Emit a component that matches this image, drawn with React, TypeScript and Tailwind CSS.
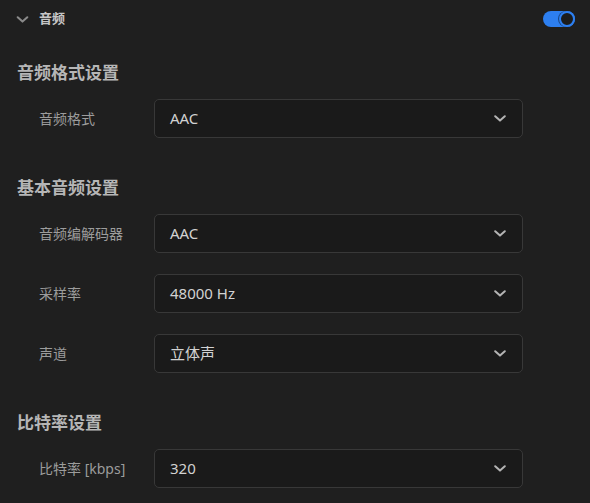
import { type FC } from 'react';

type Row = { label: string; value: string };
type Section = { title: string; rows: Row[] };

const sections: Section[] = [
  { title: '音频格式设置', rows: [{ label: '音频格式', value: 'AAC' }] },
  {
    title: '基本音频设置',
    rows: [
      { label: '音频编解码器', value: 'AAC' },
      { label: '采样率', value: '48000 Hz' },
      { label: '声道', value: '立体声' },
    ],
  },
  { title: '比特率设置', rows: [{ label: '比特率 [kbps]', value: '320' }] },
];

const Chevron: FC<{ className?: string }> = ({ className }) => (
  <svg viewBox="0 0 12 7" className={className} fill="none" stroke="currentColor" strokeWidth={2} strokeLinecap="round" strokeLinejoin="round">
    <path d="M1.2 1.2 6 5.6 10.8 1.2" />
  </svg>
);

const Select: FC<{ value: string }> = ({ value }) => (
  <div className="flex h-[39px] w-[369px] items-center justify-between rounded-[5px] border border-[#383838] bg-[#1a1a1a] pl-[15px] pr-[16px]">
    <span className="text-[15px] text-[#d2d2d2]">{value}</span>
    <Chevron className="h-[7px] w-[12px] text-[#b4b4b4]" />
  </div>
);

const App: FC = () => {
  return (
    <div
      className="h-[503px] w-[590px] overflow-hidden bg-[#1f1f1f]"
      style={{ fontFamily: '"Noto Sans", "Noto Sans CJK SC", sans-serif' }}
    >
      {/* panel header */}
      <header className="flex h-[38px] items-center justify-between pl-[16px] pr-[15px]">
        <div className="flex items-center gap-[10px]">
          <Chevron className="h-[7px] w-[13px] text-[#8a8a8a]" />
          <span className="text-[13px] font-bold text-[#c6c6c6]">音频</span>
        </div>
        <div className="relative h-[16px] w-[32px] rounded-full bg-[#2d7ff0]">
          <div className="absolute right-0 top-0 size-[16px] rounded-full border-2 border-[#2d7ff0] bg-[#1c1c1c] shadow-[-1px_0_0_rgba(0,0,0,0.45)]" />
        </div>
      </header>

      <div className="flex flex-col gap-[38px] pt-[23px]">
        {sections.map((s) => (
          <section key={s.title}>
            <h2 className="pl-[17px] text-[17px] leading-6 font-bold text-[#b6b6b6]">{s.title}</h2>
            <div className="mt-[14px] flex flex-col gap-[21px]">
              {s.rows.map((r) => (
                <div key={r.label} className="flex items-center pl-[39px]">
                  <span className="w-[115px] text-[14px] text-[#9c9c9c]">{r.label}</span>
                  <Select value={r.value} />
                </div>
              ))}
            </div>
          </section>
        ))}
      </div>
    </div>
  );
};

export default App;
